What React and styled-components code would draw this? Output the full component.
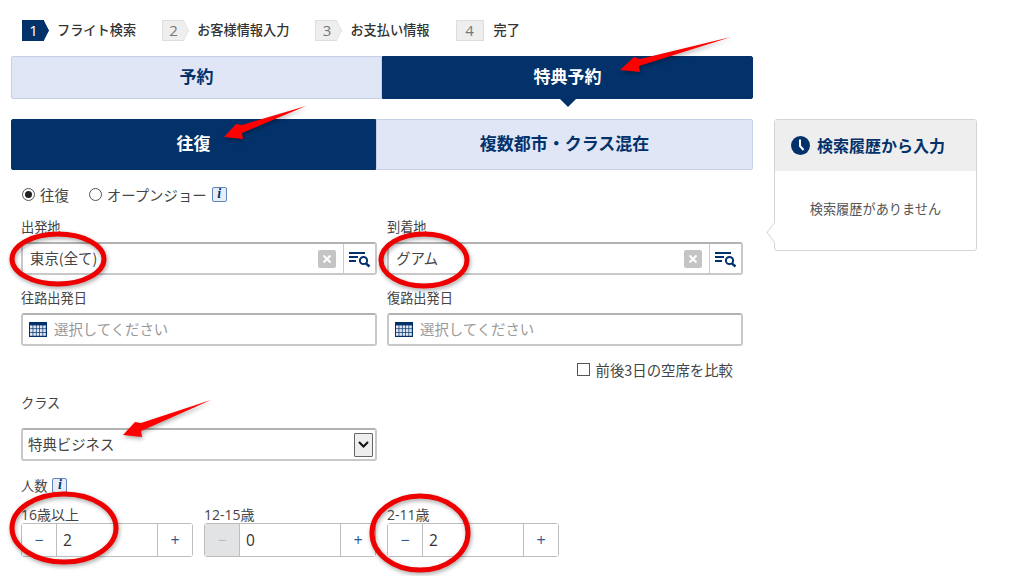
import React from 'react'
import styled, { createGlobalStyle } from 'styled-components'

const Global = createGlobalStyle`
  html, body { margin: 0; padding: 0; background: #fff; overflow: hidden; }
  body { font-family: "Noto Sans CJK JP", "Open Sans", sans-serif; color: #444; }
`

const Page = styled.div`
  position: relative;
  width: 1024px;
  height: 576px;
  overflow: hidden;
  padding: 20px 0 0 11px;
  box-sizing: border-box;
`

const Stepper = styled.div`
  display: flex;
  height: 21px;
  align-items: center;
  padding-left: 11px;
  margin-bottom: 15px;
`

const Step = styled.div`
  display: flex;
  align-items: center;
  margin-right: 26px;
  font-size: 13.2px;
  font-weight: 500;
  color: #333;
  line-height: 19px;
  padding-bottom: 2px;
`

const StepBadge = styled.span`
  position: relative;
  top: 1px;
  width: ${p => (p.$last ? '28px' : '22px')};
  height: 21px;
  margin-right: ${p => (p.$last ? '10px' : '13px')};
  box-sizing: border-box;
  display: flex;
  align-items: center;
  justify-content: center;
  font-family: "Open Sans", sans-serif;
  font-size: 15px;
  font-weight: 400;
  background: ${p => (p.$on ? '#03326b' : '#eee')};
  color: ${p => (p.$on ? '#fff' : '#777')};
  border: 1px solid ${p => (p.$on ? '#03326b' : '#ddd')};
  ${p => !p.$last && `
    border-right: none;
    &::after {
      content: '';
      position: absolute;
      right: -7px;
      top: 2px;
      width: 14px;
      height: 14px;
      background: ${p.$on ? '#03326b' : '#eee'};
      border-top: 1px solid ${p.$on ? '#03326b' : '#ddd'};
      border-right: 1px solid ${p.$on ? '#03326b' : '#ddd'};
      transform: scale(0.5, 1) rotate(45deg);
    }
  `}
`

const Layout = styled.div`
  display: flex;
`

const Main = styled.div`
  width: 742px;
`

const TabRow = styled.div`
  display: flex;
  height: ${p => p.$h}px;
  margin-bottom: ${p => p.$mb}px;
`

const Tab = styled.div`
  position: relative;
  flex: ${p => p.$w} 0 ${p => p.$w}px;
  box-sizing: border-box;
  display: flex;
  align-items: center;
  justify-content: center;
  padding-bottom: 5px;
  font-size: 17px;
  font-weight: 700;
  background: ${p => (p.$on ? '#03326b' : '#e0e6f6')};
  color: ${p => (p.$on ? '#fff' : '#03326b')};
  border: 1px solid ${p => (p.$on ? '#03326b' : '#c5d0e8')};
  border-radius: ${p => (p.$left ? '2px 0 0 2px' : '0 2px 2px 0')};
  ${p => p.$notch && `
    &::after {
      content: '';
      position: absolute;
      left: 50%;
      bottom: -9px;
      margin-left: -8px;
      border-left: 8px solid transparent;
      border-right: 8px solid transparent;
      border-top: 8px solid #03326b;
    }
  `}
`

const Form = styled.div`
  padding: 0 10px;
`

const RadioRow = styled.div`
  display: flex;
  align-items: center;
  height: 20px;
  margin-top: 14px;
  font-size: 14.4px;
`

const Radio = styled.span`
  width: 13px;
  height: 13px;
  box-sizing: border-box;
  border: 1px solid #555;
  border-radius: 50%;
  margin: 0 5px 0 1px;
  display: flex;
  align-items: center;
  justify-content: center;
  &::after {
    content: '';
    width: 7px;
    height: 7px;
    border-radius: 50%;
    background: ${p => (p.$on ? '#222' : 'transparent')};
  }
`

const RadioLabel = styled.span`
  margin-right: ${p => p.$mr || 0}px;
`

const InfoIcon = styled.span`
  display: inline-flex;
  align-items: center;
  justify-content: center;
  width: 13px;
  height: 13px;
  margin-left: 5px;
  border: 1px solid #5f84b8;
  border-radius: 2px;
  background: #e8eef8;
  font-family: "Liberation Serif", serif;
  font-style: italic;
  font-weight: 700;
  font-size: 14px;
  line-height: 1;
  color: #03326b;
`

const FieldGrid = styled.div`
  display: grid;
  grid-template-columns: 356px 356px;
  column-gap: 10px;
`

const Label = styled.div`
  height: 14px;
  line-height: 14px;
  font-size: 13.2px;
  color: #444;
`

const FieldGroup = styled.div`
  padding-top: ${p => p.$pt}px;
`

const InputBox = styled.div`
  display: flex;
  align-items: center;
  height: 33px;
  margin-top: 8px;
  box-sizing: border-box;
  border: 2px solid #c8c8c8;
  border-top-color: #b2b2b2;
  border-radius: 3px;
  background: #fff;
  font-size: 14.4px;
  color: #444;
`

const InputText = styled.span`
  flex: 1;
  padding-left: 7px;
  padding-bottom: 2px;
`

const ClearBtn = styled.span`
  width: 18px;
  height: 18px;
  margin-right: 7px;
  border-radius: 2px;
  background: #c4c4c4;
  display: flex;
  align-items: center;
  justify-content: center;
`

const SearchBtn = styled.span`
  width: 32px;
  height: 100%;
  box-sizing: border-box;
  border-left: 1px solid #ccc;
  display: flex;
  align-items: center;
  justify-content: center;
`

const CalIcon = styled.svg`
  margin: 0 7px 0 6px;
`

const Placeholder = styled.span`
  color: #999;
  font-size: 14.4px;
  padding-bottom: 2px;
`

const CompareRow = styled.div`
  display: flex;
  justify-content: flex-end;
  align-items: center;
  height: 20px;
  margin-top: 13px;
  padding-right: 10px;
  font-size: 14.4px;
`

const CheckBox = styled.span`
  width: 13px;
  height: 13px;
  box-sizing: border-box;
  border: 1px solid #555;
  margin-right: 5px;
`

const ClassLabel = styled(Label)`
  margin-top: 17px;
`

const SelectBox = styled(InputBox)`
  width: 356px;
  margin-top: 18px;
  padding-right: 2px;
`

const SelectText = styled(InputText)`
  padding-left: 5px;
`

const SelectArrow = styled.span`
  width: 19px;
  height: 24px;
  box-sizing: border-box;
  border: 1px solid #666;
  border-radius: 1px;
  background: #eee;
  display: flex;
  align-items: center;
  justify-content: center;
`

const PeopleLabel = styled.div`
  display: flex;
  align-items: center;
  height: 16px;
  margin-top: 16px;
  font-size: 13.2px;
`

const Steppers = styled.div`
  display: flex;
  gap: 11px;
  margin-top: 14px;
`

const StepperCol = styled.div`
  width: 172px;
`

const AgeLabel = styled.div`
  height: 15px;
  margin-bottom: 1px;
  line-height: 15px;
  font-size: 14px;
  font-family: "Open Sans", "Noto Sans CJK JP", sans-serif;
  color: #444;
`

const Counter = styled.div`
  display: flex;
  height: 34px;
  box-sizing: border-box;
  border: 1px solid #bdbdbd;
  border-radius: 3px;
  font-family: "Open Sans", sans-serif;
`

const CountBtn = styled.span`
  width: ${p => p.$w}px;
  display: flex;
  align-items: center;
  justify-content: center;
  font-size: 16px;
  color: ${p => (p.$off ? '#bbb' : '#2f5a94')};
  background: ${p => (p.$off ? '#e2e3e4' : '#fff')};
`

const CountValue = styled.span`
  flex: 1;
  padding-left: 6px;
  display: flex;
  align-items: center;
  font-size: 15.5px;
  color: #333;
  border-left: 1px solid #bdbdbd;
  border-right: 1px solid #bdbdbd;
`

const Side = styled.aside`
  position: relative;
  width: 203px;
  height: 132px;
  margin: 63px 0 0 21px;
  box-sizing: border-box;
  border: 1px solid #d4d4d4;
  border-radius: 3px;
  background: #fff;
  &::before {
    content: '';
    position: absolute;
    left: -8px;
    top: 105px;
    width: 14px;
    height: 14px;
    background: #fff;
    border-left: 1px solid #d4d4d4;
    border-bottom: 1px solid #d4d4d4;
    transform: scale(0.75, 1) rotate(45deg);
  }
`

const SideHead = styled.div`
  display: flex;
  align-items: center;
  height: 51px;
  padding-left: 16px;
  background: #eee;
  font-size: 16px;
  font-weight: 700;
  color: #03326b;
  gap: 7px;
`

const SideHeadText = styled.span`
  padding-bottom: 2px;
`

const SideBody = styled.div`
  display: flex;
  align-items: center;
  justify-content: center;
  height: 78px;
  padding-bottom: 3px;
  box-sizing: border-box;
  font-size: 13.2px;
  color: #555;
`

const Marks = styled.svg`
  position: absolute;
  left: 0;
  top: 0;
  pointer-events: none;
  filter: drop-shadow(1px 2px 2px rgba(0, 0, 0, 0.35));
`

const Clear = () => (
  <ClearBtn>
    <svg width="10" height="10" viewBox="0 0 10 10"><path d="M1.5 1.5l7 7M8.5 1.5l-7 7" stroke="#fff" strokeWidth="2" /></svg>
  </ClearBtn>
)

const ListSearch = () => (
  <svg width="24" height="18" viewBox="0 0 24 18" fill="none">
    <path d="M1 3h16M1 7h9M1 11h7" stroke="#03326b" strokeWidth="2" />
    <circle cx="15.5" cy="10.5" r="3.6" stroke="#03326b" strokeWidth="2" />
    <path d="M18 13.5l3.5 3" stroke="#03326b" strokeWidth="2.4" />
  </svg>
)

const Calendar = () => (
  <CalIcon width="18" height="15" viewBox="0 0 18 15">
    <rect x="0" y="0" width="18" height="15" fill="#03326b" />
    {[0, 1, 2, 3, 4].map(c =>
      [0, 1, 2].map(r => (
        <rect key={c + '-' + r} x={1 + c * 3.3} y={3.4 + r * 3.7} width="2.6" height="3" fill="#dfe7f4" />
      ))
    )}
  </CalIcon>
)

const Clock = () => (
  <svg width="19" height="19" viewBox="0 0 19 19">
    <circle cx="9.5" cy="9.5" r="9.5" fill="#03326b" />
    <path d="M9 3.5v6.5l3.5 4" stroke="#fff" strokeWidth="2" fill="none" />
  </svg>
)

const ageGroups = [
  { label: '16歳以上', value: 2 },
  { label: '12-15歳', value: 0, off: true },
  { label: '2-11歳', value: 2 },
]

const arrows = [
  'M731 37 L640 59 L634 57 L620 70 L640 72 L639 66 Z',
  'M306 106 L242 125 L236 124 L224 137 L243 139 L242 133 Z',
  'M211 400 L141 423 L135 422 L123 435 L142 437 L141 431 Z',
]

const ellipses = [
  [58, 259, 46, 25],
  [424, 260, 43, 26],
  [64, 528, 52, 34],
  [420, 533, 48, 37],
]

export default function App() {
  return (
    <Page>
      <Global />
      <Stepper>
        <Step><StepBadge $on>1</StepBadge>フライト検索</Step>
        <Step><StepBadge>2</StepBadge>お客様情報入力</Step>
        <Step><StepBadge>3</StepBadge>お支払い情報</Step>
        <Step><StepBadge $last>4</StepBadge>完了</Step>
      </Stepper>
      <Layout>
        <Main>
          <TabRow $h={43} $mb={20}>
            <Tab $w={371} $left>予約</Tab>
            <Tab $w={371} $on $notch>特典予約</Tab>
          </TabRow>
          <TabRow $h={51} $mb={0}>
            <Tab $w={365} $on $left>往復</Tab>
            <Tab $w={377}>複数都市・クラス混在</Tab>
          </TabRow>
          <Form>
            <RadioRow>
              <Radio $on />
              <RadioLabel $mr={19}>往復</RadioLabel>
              <Radio />
              <RadioLabel>オープンジョー</RadioLabel>
              <InfoIcon>i</InfoIcon>
            </RadioRow>
            <FieldGrid>
              <FieldGroup $pt={16}>
                <Label>出発地</Label>
                <InputBox>
                  <InputText>東京(全て)</InputText>
                  <Clear />
                  <SearchBtn><ListSearch /></SearchBtn>
                </InputBox>
              </FieldGroup>
              <FieldGroup $pt={16}>
                <Label>到着地</Label>
                <InputBox>
                  <InputText>グアム</InputText>
                  <Clear />
                  <SearchBtn><ListSearch /></SearchBtn>
                </InputBox>
              </FieldGroup>
              <FieldGroup $pt={16}>
                <Label>往路出発日</Label>
                <InputBox><Calendar /><Placeholder>選択してください</Placeholder></InputBox>
              </FieldGroup>
              <FieldGroup $pt={16}>
                <Label>復路出発日</Label>
                <InputBox><Calendar /><Placeholder>選択してください</Placeholder></InputBox>
              </FieldGroup>
            </FieldGrid>
            <CompareRow><CheckBox />前後3日の空席を比較</CompareRow>
            <ClassLabel>クラス</ClassLabel>
            <SelectBox>
              <SelectText>特典ビジネス</SelectText>
              <SelectArrow>
                <svg width="11" height="7" viewBox="0 0 11 7"><path d="M1 1l4.5 4.5L10 1" stroke="#111" strokeWidth="2" fill="none" /></svg>
              </SelectArrow>
            </SelectBox>
            <PeopleLabel>人数<InfoIcon>i</InfoIcon></PeopleLabel>
            <Steppers>
              {ageGroups.map(g => (
                <StepperCol key={g.label}>
                  <AgeLabel>{g.label}</AgeLabel>
                  <Counter>
                    <CountBtn $w={34} $off={g.off}>−</CountBtn>
                    <CountValue>{g.value}</CountValue>
                    <CountBtn $w={34}>+</CountBtn>
                  </Counter>
                </StepperCol>
              ))}
            </Steppers>
          </Form>
        </Main>
        <Side>
          <SideHead><Clock /><SideHeadText>検索履歴から入力</SideHeadText></SideHead>
          <SideBody>検索履歴がありません</SideBody>
        </Side>
      </Layout>
      <Marks width="1024" height="576" viewBox="0 0 1024 576">
        {arrows.map(d => <path key={d} d={d} fill="#f00" />)}
        {ellipses.map(([cx, cy, rx, ry]) => (
          <ellipse key={cx} cx={cx} cy={cy} rx={rx} ry={ry} fill="none" stroke="#ee0000" strokeWidth="5" />
        ))}
      </Marks>
    </Page>
  )
}
